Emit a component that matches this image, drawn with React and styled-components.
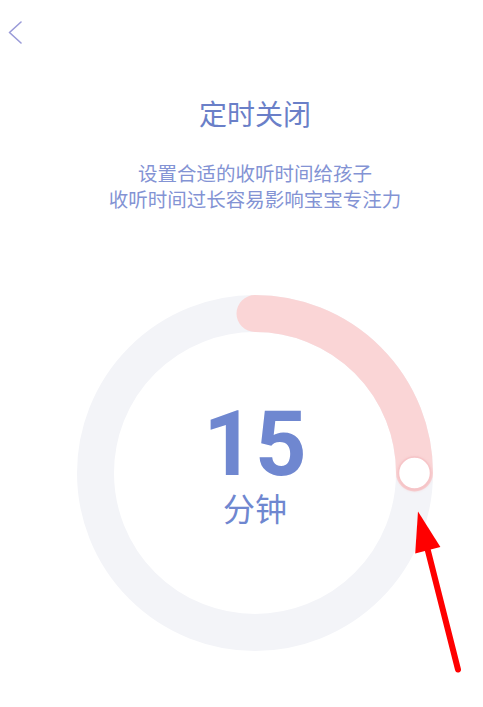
import React from "react";
import styled, { createGlobalStyle } from "styled-components";

const GlobalStyle = createGlobalStyle`
  html, body {
    margin: 0;
    padding: 0;
    background: #ffffff;
  }
  body {
    font-family: "Noto Sans CJK SC", "Noto Sans", sans-serif;
  }
`;

const Page = styled.div`
  width: 483px;
  height: 707px;
  overflow: hidden;
  background: #ffffff;
`;

const Header = styled.div`
  height: 64px;
  display: flex;
  align-items: center;
  padding-left: 8px;
`;

const BackButton = styled.button`
  display: flex;
  padding: 0;
  border: none;
  background: none;
  cursor: pointer;
`;

const Main = styled.div`
  display: flex;
  flex-direction: column;
  align-items: center;
  padding-left: 27px;
`;

const Title = styled.h1`
  margin: 31px 0 0;
  font-size: 28px;
  line-height: 36px;
  font-weight: 400;
  color: #6a7fc8;
`;

const Subtitle = styled.p`
  margin: 29px 0 0;
  font-size: 19.5px;
  line-height: 26px;
  color: #8393d4;
  text-align: center;
  white-space: nowrap;
`;

const Dial = styled.div`
  position: relative;
  margin-top: 83px;
  width: 356px;
  height: 356px;
  display: grid;
  place-items: center;

  & > * {
    grid-area: 1 / 1;
  }
`;

const Readout = styled.div`
  display: flex;
  flex-direction: column;
  align-items: center;
  margin-bottom: 16px;
  color: #6f87d0;
`;

const Minutes = styled.div`
  font-family: Roboto, "Liberation Sans", sans-serif;
  font-weight: 700;
  font-size: 90px;
  line-height: 80px;
`;

const Unit = styled.div`
  margin-top: 4px;
  font-size: 32px;
  line-height: 36px;
`;

const Pointer = styled.svg`
  position: absolute;
  left: 0;
  top: 0;
  overflow: visible;
  pointer-events: none;
`;

const SIZE = 356;
const STROKE = 37;
const C = SIZE / 2;
const R = C - STROKE / 2;

function polar(deg) {
  const a = ((deg - 90) * Math.PI) / 180;
  return [C + R * Math.cos(a), C + R * Math.sin(a)];
}

const TimerRing = ({ minutes, max }) => {
  const deg = (minutes / max) * 360;
  const [sx, sy] = polar(0);
  const [ex, ey] = polar(deg);
  const large = deg > 180 ? 1 : 0;
  return (
    <svg width={SIZE} height={SIZE} viewBox={`0 0 ${SIZE} ${SIZE}`}>
      <defs>
        <filter id="knobShadow" x="-50%" y="-50%" width="200%" height="200%">
          <feDropShadow dx="0" dy="1" stdDeviation="1.5" floodColor="#e79aa0" floodOpacity="0.45" />
        </filter>
      </defs>
      <circle cx={C} cy={C} r={R} fill="none" stroke="#f3f4f8" strokeWidth={STROKE} />
      <path
        d={`M${sx} ${sy} A${R} ${R} 0 ${large} 1 ${ex} ${ey}`}
        fill="none"
        stroke="#fad5d6"
        strokeWidth={STROKE}
        strokeLinecap="round"
      />
      <circle
        cx={ex}
        cy={ey}
        r="16"
        fill="#ffffff"
        stroke="#f6c5c8"
        strokeWidth="1.5"
        filter="url(#knobShadow)"
      />
    </svg>
  );
};

export default function App() {
  return (
    <Page>
      <GlobalStyle />
      <Header>
        <BackButton aria-label="返回">
          <svg width="14" height="25" viewBox="0 0 14 25">
            <polyline
              points="13,2 1.5,12.5 13,23"
              fill="none"
              stroke="#9a9bd8"
              strokeWidth="1.6"
              strokeLinecap="round"
              strokeLinejoin="round"
            />
          </svg>
        </BackButton>
      </Header>
      <Main>
        <Title>定时关闭</Title>
        <Subtitle>
          设置合适的收听时间给孩子
          <br />
          收听时间过长容易影响宝宝专注力
        </Subtitle>
        <Dial>
          <TimerRing minutes={15} max={60} />
          <Readout>
            <Minutes>15</Minutes>
            <Unit>分钟</Unit>
          </Readout>
          <Pointer width={SIZE} height={SIZE}>
            <line x1="350" y1="252" x2="381" y2="374.5" stroke="#ff0000" strokeWidth="6" strokeLinecap="round" />
            <polygon points="341,216.5 338.2,258.5 363.4,252.1" fill="#ff0000" />
          </Pointer>
        </Dial>
      </Main>
    </Page>
  );
}
